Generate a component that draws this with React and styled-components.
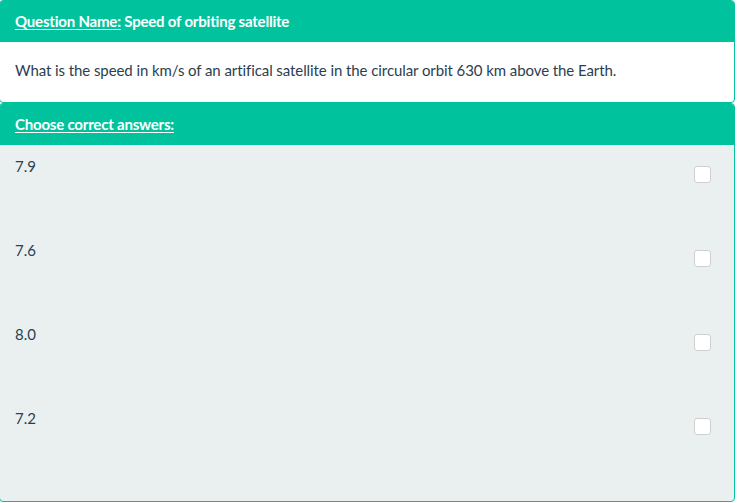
import React from 'react';
import styled, { createGlobalStyle } from 'styled-components';

const GlobalStyle = createGlobalStyle`
  html, body {
    margin: 0;
    padding: 0;
    background: #ffffff;
  }
  body {
    font-family: Lato, "Open Sans", sans-serif;
    font-size: 15px;
    color: #2c3e50;
  }
`;

const TEAL = '#00c39e';

const Page = styled.div`
  width: 736px;
  margin-left: -1px;
`;

const Panel = styled.div`
  border: 1px solid ${TEAL};
  border-radius: 4px;
  overflow: hidden;
  background: ${p => (p.muted ? '#eaf0f0' : '#ffffff')};
`;

const Heading = styled.div`
  background: ${TEAL};
  color: #ffffff;
  font-weight: 700;
  line-height: 20px;
  padding: 10px 15px 11px;
  letter-spacing: -0.2px;
`;

const Label = styled.span`
  text-decoration: underline;
  text-underline-offset: 2px;
`;

const Question = styled.div`
  padding: 18px 15px 22px;
  line-height: 20px;
  letter-spacing: -0.08px;
`;

const Answers = styled.div`
  padding-bottom: 20px;
`;

const Row = styled.div`
  height: 84px;
  display: flex;
  justify-content: space-between;
  align-items: flex-start;
  padding: 11px 23px 0 15px;
  box-sizing: border-box;
  line-height: 20px;
`;

const Box = styled.span`
  display: block;
  width: 15px;
  height: 15px;
  margin-top: 10px;
  background: #ffffff;
  border: 1px solid #cfcfcf;
  border-radius: 3px;
`;

const answers = ['7.9', '7.6', '8.0', '7.2'];

export default function App() {
  return (
    <Page>
      <GlobalStyle />
      <Panel>
        <Heading>
          <Label>Question Name:</Label> Speed of orbiting satellite
        </Heading>
        <Question>
          What is the speed in km/s of an artifical satellite in the circular orbit 630 km above the Earth.
        </Question>
      </Panel>
      <Panel muted>
        <Heading>
          <Label>Choose correct answers:</Label>
        </Heading>
        <Answers>
          {answers.map(a => (
            <Row key={a}>
              <span>{a}</span>
              <Box />
            </Row>
          ))}
        </Answers>
      </Panel>
    </Page>
  );
}
